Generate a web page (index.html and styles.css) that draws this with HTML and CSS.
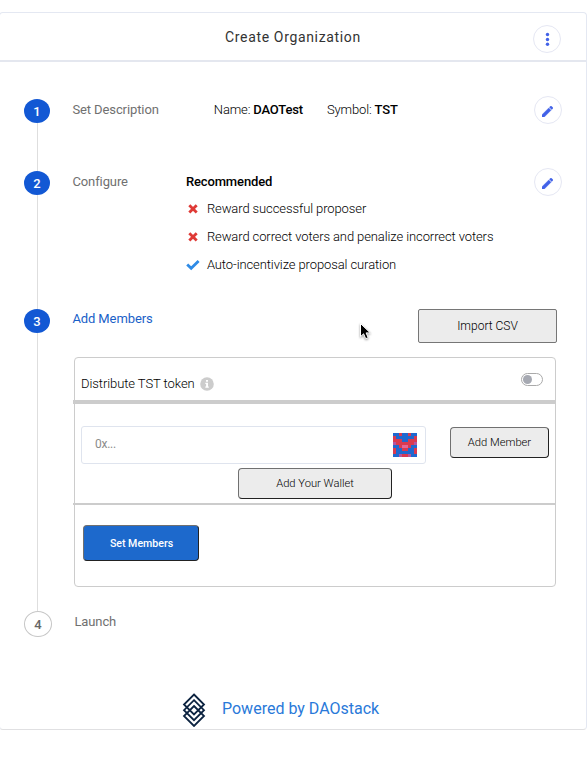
FILE: index.html
```html
<!DOCTYPE html>
<html lang="en">
<head>
<meta charset="utf-8">
<title>Create Organization</title>
<link rel="stylesheet" href="styles.css">
</head>
<body>
<main class="card">
  <header class="header">
    <h1 class="title">Create Organization</h1>
    <button class="round menu" aria-label="Menu"><svg width="12" height="14" viewBox="0 0 12 14" fill="#4262e8"><circle cx="6.500" cy="2.500" r="1.700"/><circle cx="6.500" cy="7.500" r="1.700"/><circle cx="6.500" cy="12.200" r="1.700"/></svg></button>
  </header>

  <section class="step step1">
    <div class="rail"><span class="dot">1</span><i class="line"></i></div>
    <h2 class="label l1">Set Description</h2>
    <div class="summary"><span class="name">Name: <b>DAOTest</b></span><span class="symbol">Symbol: <b>TST</b></span></div>
    <button class="round edit" aria-label="Edit"><svg width="11" height="11" viewBox="3 3 18 18" fill="#4262e8" stroke="#4262e8" stroke-width=".7"><path d="M3 17.25V21h3.75L17.81 9.94l-3.75-3.75L3 17.25zM20.71 7.04a1 1 0 0 0 0-1.41l-2.34-2.34a1 1 0 0 0-1.41 0l-1.83 1.83 3.75 3.75 1.83-1.83z"/></svg></button>
  </section>

  <section class="step step2">
    <div class="rail"><span class="dot">2</span><i class="line"></i></div>
    <h2 class="label l2">Configure</h2>
    <div class="config">
      <b class="rec">Recommended</b>
      <ul class="options">
        <li><svg class="mark" width="14" height="12" viewBox="0 0 14 12"><path d="M3.300 2.200l7.400 7.400M10.700 2.200l-7.400 7.400" stroke="#df3a36" stroke-width="2.800"/></svg><span>Reward successful proposer</span></li>
        <li><svg class="mark" width="14" height="12" viewBox="0 0 14 12"><path d="M3.300 2.200l7.400 7.400M10.700 2.200l-7.400 7.400" stroke="#df3a36" stroke-width="2.800"/></svg><span>Reward correct voters and penalize incorrect voters</span></li>
        <li><svg class="mark" width="14" height="12" viewBox="0 0 14 12"><path d="M1.200 5.400l4 3.900 7.400-7.300" fill="none" stroke="#2f8be6" stroke-width="2.800"/></svg><span>Auto-incentivize proposal curation</span></li>
      </ul>
    </div>
    <button class="round edit" aria-label="Edit"><svg width="11" height="11" viewBox="3 3 18 18" fill="#4262e8" stroke="#4262e8" stroke-width=".7"><path d="M3 17.25V21h3.75L17.81 9.94l-3.75-3.75L3 17.25zM20.71 7.04a1 1 0 0 0 0-1.41l-2.34-2.34a1 1 0 0 0-1.41 0l-1.83 1.83 3.75 3.75 1.83-1.83z"/></svg></button>
  </section>

  <section class="step step3">
    <div class="rail"><span class="dot">3</span><i class="line"></i></div>
    <div class="members">
      <div class="members-head">
        <h2 class="label active l3">Add Members</h2>
        <button class="btn import"><span>Import CSV</span></button>
      </div>
      <div class="panel">
        <div class="distribute">
          <span class="dist">Distribute TST token</span>
          <svg class="info" width="14" height="14" viewBox="0 0 14 14"><circle cx="7" cy="7" r="6.8" fill="#ccc"/><path d="M6 3h2v1.8H6zM5.3 5.8H8v3.6h.8v1.3H5.3V9.400h.8V7.100h-.8z" fill="#fff"/></svg>
          <span class="toggle"><i class="knob"></i></span>
        </div>
        <hr class="rule thick">
        <div class="entry">
          <div class="address"><span class="placeholder">0x...</span>
            <svg class="blocky" width="24" height="24" viewBox="0 0 8 8" shape-rendering="crispEdges"><path fill="#2068cf" d="M0 0h8v8H0z"/><path fill="#d93a50" d="M2 0h1v1H2zM5 0h1v1H5zM0 1h1v2H0zM7 1h1v2H7zM1 2h2v1H1zM5 2h2v1H5zM1 3h6v1H1zM2 4h4v1H2zM0 5h1v2H0zM7 5h1v2H7zM3 5h2v1H3zM2 7h4v1H2z"/><path fill="#b556a0" d="M0 3h1v1H0zM7 3h1v1H7zM2 7h1v1H2zM5 7h1v1H5z"/><path fill="#e66595" d="M3 4h2v1H3z"/></svg>
          </div>
          <button class="btn add"><span>Add Member</span></button>
        </div>
        <button class="btn wallet"><span>Add Your Wallet</span></button>
        <hr class="rule">
        <button class="btn set"><span>Set Members</span></button>
      </div>
    </div>
  </section>

  <section class="step step4">
    <div class="rail"><span class="dot pending">4</span></div>
    <h2 class="label l4">Launch</h2>
  </section>

  <footer class="footer">
    <svg class="logo" width="24" height="34" viewBox="0 0 24 34" fill="none" stroke="#0c2340" stroke-width="1.8"><path d="M12 1.500L22 11.500 12 21.500 2 11.500zM12 7.200L22 17.200 12 27.200 2 17.200zM12 13L22 23 12 33 2 23z"/></svg>
    <a class="powered">Powered by DAOstack</a>
  </footer>
</main>
<svg class="cursor" width="14" height="20" viewBox="0 0 14 20"><path d="M1.500 1.500v13.200l3.100-2.900 2.100 4.900 2.500-1-2.100-4.800h4.200z" fill="#000" stroke="#fff" stroke-width="1"/></svg>
</body>
</html>
```
FILE: styles.css
```css
* { box-sizing: border-box; }
body { margin: 0; background: #fff; font: 300 13px/16px Roboto, sans-serif; color: #000; overflow: hidden; }
h1, h2, ul { margin: 0; padding: 0; list-style: none; }
b { font-weight: 500; color: #000; }
button { padding: 0; font: inherit; color: inherit; }
svg { display: block; }

.card { width: 588px; height: 718px; margin: 12px 0 0 -1px; border: 1px solid #e4e8f2; border-bottom-color: #e0e0e2; border-radius: 4px; display: flex; flex-direction: column; }
.header { height: 49px; flex: none; display: flex; align-items: center; justify-content: space-between; padding: 0 25px 0 225px; border-bottom: 2px solid #e4e7ef; }
.title { font: 400 14px/20px Roboto, sans-serif; letter-spacing: .66px; color: #333; white-space: nowrap; }
.round { width: 28px; height: 28px; border: 1px solid #e5e7f3; border-radius: 50%; background: #fff; display: flex; align-items: center; justify-content: center; flex: none; }
.menu { margin-top: 5px; }
.edit { margin: -3px 24px 0 auto; padding: 3px 1px 0 0; }

.step { display: flex; align-items: flex-start; padding-left: 24px; flex: none; }
.step1 { height: 72px; margin-top: 37px; }
.step2 { height: 138px; }
.step3 { height: 302px; }
.rail { width: 28px; height: 100%; margin-right: 20px; display: flex; flex-direction: column; flex: none; }
.dot { width: 26px; height: 24px; border-radius: 50%; background: #1258d4; color: #fff; font-weight: 500; line-height: 25px; text-align: center; flex: none; }
.pending { width: 28px; height: 26px; background: #fff; border: 1px solid #c6c6c6; color: #666; line-height: 25px; }
.line { width: 1px; flex: 1; margin-left: 13px; background: #dedede; }
.label { font: 400 13px/16px Roboto, sans-serif; letter-spacing: -.1px; color: #707070; white-space: nowrap; margin: 3px 0 0 .4px; }
.active { color: #1a5fc8; }
.summary { display: flex; margin: 3px 0 0 55px; gap: 24px; white-space: nowrap; letter-spacing: -.15px; }
.config { margin: 3px 0 0 58px; }
.rec { display: block; letter-spacing: -.13px; }
.options { padding-top: 5px; letter-spacing: -.1px; }
.options li { display: flex; align-items: center; height: 28px; gap: 7px; white-space: nowrap; }

.members { flex: 1; padding-right: 31px; }
.members-head { height: 48px; display: flex; justify-content: space-between; align-items: flex-start; }
.l3 { margin-top: 2px; }
.btn { display: flex; align-items: center; justify-content: center; background: #ececec; border: 1px solid #222; border-top-color: #707070; border-left-color: #707070; border-radius: 4px; white-space: nowrap; font-size: 12px; }
.import { width: 139px; height: 34px; border-color: #767676; border-radius: 2px; margin-right: -1px; }
.panel { width: 482px; height: 230px; margin-left: 2px; border: 1px solid #ccc; border-radius: 4px; }
.distribute { height: 42px; display: flex; align-items: center; padding: 10px 12px 0 6px; }
.dist { letter-spacing: -.08px; }
.info { margin-left: 5px; }
.toggle { width: 22px; height: 13px; border: 1px solid #aaa; border-radius: 7px; margin: -9px 0 0 auto; padding: 1px; }
.knob { display: block; width: 9px; height: 9px; border-radius: 50%; background: #a6a9b2; }
.rule { height: 2px; margin: 0 0 0 -2px; border: 0; background: #ccc; }
.thick { height: 4px; }
.entry { display: flex; align-items: flex-start; justify-content: space-between; padding: 22px 6px 0; }
.address { width: 345px; height: 38px; border: 1px solid #dfe4ee; border-radius: 3px; display: flex; align-items: center; justify-content: space-between; padding: 0 8px 0 13px; }
.placeholder { font: 400 12px/16px Roboto, sans-serif; letter-spacing: -.25px; color: #8b8b8b; margin-top: -2px; }
.add { width: 99px; height: 31px; margin-top: 1px; font-size: 11.2px; }
.wallet { width: 154px; height: 31px; margin: 4px 0 4px 163px; font-size: 11.2px; }
.set { width: 116px; height: 36px; margin: 20px 0 0 8px; padding: 1px 0 0 1px; background: #1d69cc; color: #fff; font-weight: 500; font-size: 10.6px; }
.l4 { margin-left: 2.4px; }
.footer { margin-top: auto; height: 36px; display: flex; align-items: flex-start; padding-left: 182px; }
.powered { margin: 6px 0 0 16px; font: 400 16px/20px Roboto, sans-serif; color: #2979d9; white-space: nowrap; }
.cursor { position: absolute; left: 359px; top: 322px; filter: drop-shadow(0 1px 1px #0006); }
```
